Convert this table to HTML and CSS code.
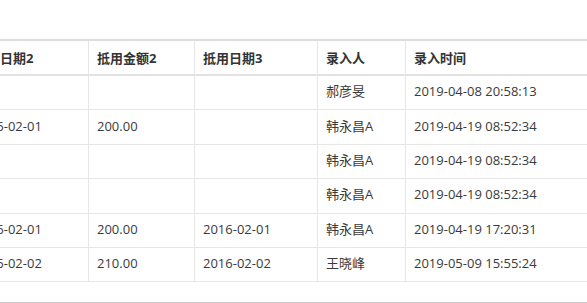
FILE: index.html
```html
<!DOCTYPE html>
<html lang="zh-CN">
<head>
<meta charset="utf-8">
<link rel="stylesheet" href="styles.css">
</head>
<body>
<div class="wrap">
  <div class="scroller">
    <table class="grid">
      <colgroup>
        <col class="c-a"><col class="c-b"><col class="c-c"><col class="c-d"><col class="c-e">
      </colgroup>
      <thead>
        <tr><th>抵用日期2</th><th>抵用金额2</th><th>抵用日期3</th><th>录入人</th><th>录入时间</th></tr>
      </thead>
      <tbody>
        <tr><td></td><td></td><td></td><td>郝彦旻</td><td>2019-04-08 20:58:13</td></tr>
        <tr><td>2016-02-01</td><td>200.00</td><td></td><td>韩永昌A</td><td>2019-04-19 08:52:34</td></tr>
        <tr><td></td><td></td><td></td><td>韩永昌A</td><td>2019-04-19 08:52:34</td></tr>
        <tr><td></td><td></td><td></td><td>韩永昌A</td><td>2019-04-19 08:52:34</td></tr>
        <tr><td>2016-02-01</td><td>200.00</td><td>2016-02-01</td><td>韩永昌A</td><td>2019-04-19 17:20:31</td></tr>
        <tr><td>2016-02-02</td><td>210.00</td><td>2016-02-02</td><td>王晓峰</td><td>2019-05-09 15:55:24</td></tr>
      </tbody>
    </table>
  </div>
  <div class="bottom-bar"></div>
</div>
</body>
</html>
```

FILE: styles.css
```css
html, body {
  margin: 0;
  padding: 0;
  background: #fff;
}
body {
  font-family: "Open Sans", "Noto Sans CJK SC", sans-serif;
  font-size: 13px;
  color: #333;
}
.wrap {
  padding-top: 39px;
  overflow: hidden;
  width: 587px;
}
.scroller {
  height: 261px;
  overflow: hidden;
  border-top: 2px solid #dcdcdc;
}
.grid {
  margin-left: -34px;
  border-collapse: separate;
  border-spacing: 0;
  table-layout: fixed;
  width: 660px;
}
.c-a { width: 123px; }
.c-b { width: 106px; }
.c-c { width: 123px; }
.c-d { width: 88px; }
.c-e { width: 220px; }
.grid th,
.grid td {
  text-align: left;
  padding: 0 8px;
  border-right: 1px solid #e6e6e6;
  white-space: nowrap;
  overflow: hidden;
  vertical-align: middle;
  line-height: 18px;
}
.grid th {
  height: 33px;
  font-weight: bold;
  color: #333;
  border-bottom: 2px solid #e2e2e2;
}
.grid td {
  height: 33.4px;
  padding-bottom: 3px;
  box-sizing: border-box;
  height: 34.4px;
  color: #3a3a3a;
  border-bottom: 1px solid #e6e6e6;
}
.bottom-bar {
  height: 2px;
  background: linear-gradient(#c4c4c4, #dedede);
}
```
